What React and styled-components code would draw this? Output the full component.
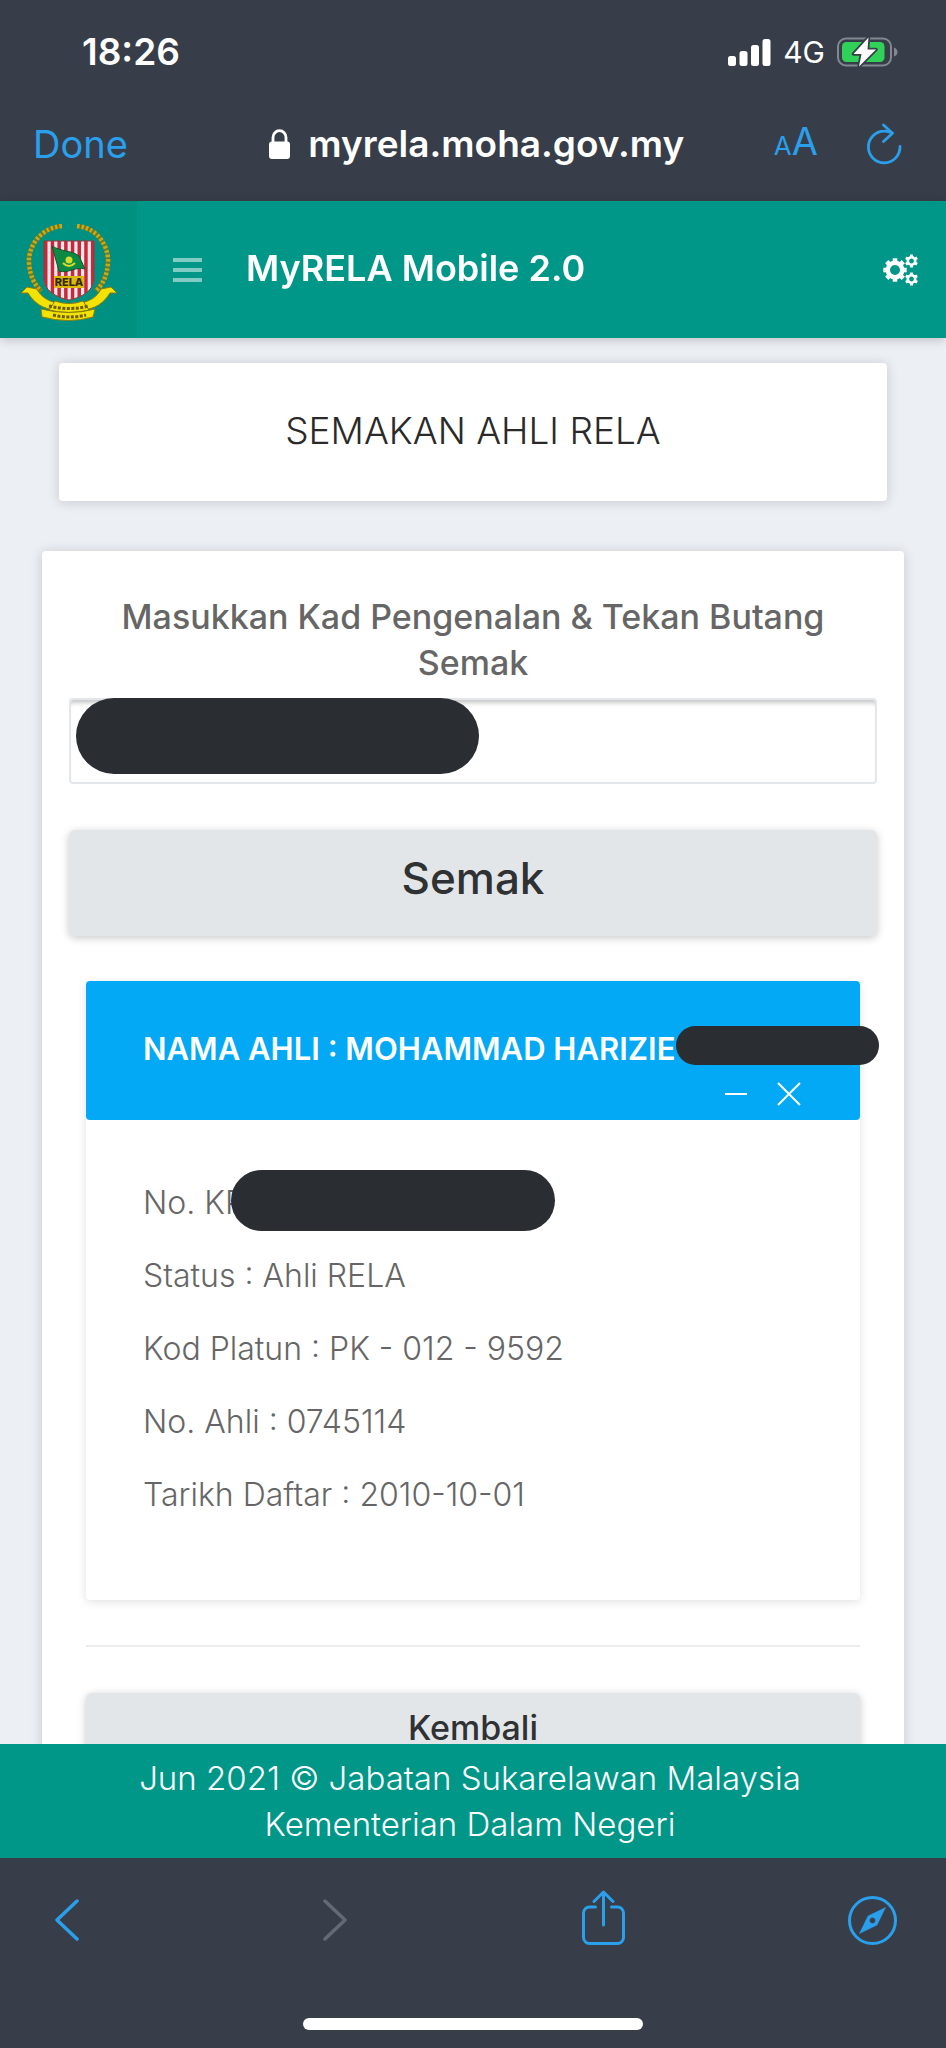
import styled, { createGlobalStyle } from "styled-components";

const GlobalStyles = createGlobalStyle`
  *,
  *::before,
  *::after {
    box-sizing: border-box;
    margin: 0;
    padding: 0;
  }

  body {
    font-family: Inter, "Liberation Sans", sans-serif;
    font-size: 32px;
    line-height: 46px;
    color: #666;
    background-color: #373e49;
  }

  button,
  input {
    font: inherit;
  }

  button {
    border: none;
    background: none;
    color: inherit;
    cursor: pointer;
  }
`;

const Phone = styled.div`
  display: flex;
  flex-direction: column;
  height: 100vh;
`;

/* Browser bars */

const StatusBar = styled.div`
  flex: none;
  display: flex;
  align-items: center;
  justify-content: space-between;
  height: 104px;
  padding: 0 48px 0 82px;
  color: #fff;
`;

const Time = styled.span`
  font-size: 37px;
  font-weight: 600;
`;

const Signals = styled.div`
  display: flex;
  align-items: center;
  gap: 12px;
  font-size: 30px;
`;

const AddressBar = styled.div`
  flex: none;
  display: flex;
  align-items: center;
  justify-content: space-between;
  height: 97px;
  padding: 0 44px 18px 33px;
  font-size: 38px;
  color: #2a9fec;
`;

const Address = styled.div`
  display: flex;
  align-items: center;
  gap: 18px;
  padding-left: 52px;
  font-size: 37px;
  font-weight: 600;
  color: #fff;
`;

const AddressActions = styled.div`
  display: flex;
  align-items: center;
  gap: 48px;

  svg {
    display: block;
  }
`;

const SmallA = styled.span`
  font-size: 26px;
`;

const ToolBar = styled.nav`
  flex: none;
  display: flex;
  justify-content: space-between;
  height: 124px;
  padding: 0 49px 0 42px;
  color: #2a9fec;
`;

const ToolButton = styled.button`
  display: flex;
  align-items: center;
  justify-content: center;
  width: 49px;

  &:disabled {
    color: #646a73;
  }
`;

const HomeArea = styled.div`
  flex: none;
  display: flex;
  justify-content: center;
  height: 66px;
  padding-top: 36px;
`;

const HomeIndicator = styled.div`
  width: 36%;
  height: 12px;
  border-radius: 6px;
  background-color: #fff;
`;

/* Site */

const Header = styled.header`
  flex: none;
  display: flex;
  align-items: center;
  height: 137px;
  padding-right: 27px;
  background-color: #009688;
  color: #fff;
  box-shadow: 0 2px 10px rgba(0, 0, 0, 0.2);
  z-index: 1;
`;

const Brand = styled.a`
  display: flex;
  align-items: center;
  justify-content: center;
  width: 137px;
  height: 100%;
  background-color: #009081;
`;

const MenuButton = styled.button`
  display: flex;
  flex-direction: column;
  gap: 6px;
  width: 29px;
  margin: 0 44px 0 36px;

  span {
    height: 4px;
    background-color: rgba(255, 255, 255, 0.5);
  }
`;

const SiteTitle = styled.h1`
  flex: 1;
  padding-bottom: 4px;
  font-size: 36px;
  font-weight: 600;
`;

const SettingsButton = styled.button`
  display: flex;
`;

const Content = styled.main`
  flex: 1;
  min-height: 0;
  overflow-y: auto;
  scrollbar-width: none;
  padding: 25px 42px 0;
  background-color: #eceff4;
`;

const Card = styled.section`
  border-radius: 4px;
  background-color: #fff;
  box-shadow: 0 1px 12px 1px rgba(0, 0, 0, 0.14);
`;

const TitleCard = styled(Card)`
  margin: 0 17px 50px;
  padding: 45px 46px 47px;
  text-align: center;
`;

const PageTitle = styled.h2`
  font-size: 37px;
  font-weight: 300;
  color: #2a2a2a;
`;

const FormCard = styled(Card)`
  padding: 43px 27px 60px;
`;

const Label = styled.label`
  display: block;
  padding: 0 40px;
  margin-bottom: 12px;
  font-size: 34px;
  font-weight: 500;
  text-align: center;
`;

const Field = styled.div`
  position: relative;
  margin-bottom: 46px;
`;

const Input = styled.input`
  display: block;
  width: 100%;
  height: 86px;
  padding: 0 24px;
  border: 2px solid #e3e6ea;
  border-radius: 4px;
  box-shadow: inset 0 6px 4px -3px rgba(0, 0, 0, 0.22);
  outline: none;
`;

const Redacted = styled.span`
  position: absolute;
  top: ${(props) => props.$top}px;
  left: ${(props) => props.$left}px;
  width: ${(props) => props.$width}px;
  height: ${(props) => props.$height}px;
  border-radius: 40px;
  background-color: #2a2e32;
`;

const Button = styled.button`
  display: block;
  width: 100%;
  height: ${(props) => (props.$large ? 106 : 80)}px;
  padding-bottom: 10px;
  border-radius: 6px;
  background-color: #e3e6e9;
  box-shadow: 0 2px 8px rgba(0, 0, 0, 0.22);
  font-size: ${(props) => (props.$large ? 44 : 34)}px;
  font-weight: 500;
  color: #2f3133;
`;

const Result = styled.div`
  padding: 0 17px;
`;

const Panel = styled.article`
  margin: 45px 0;
  border-radius: 4px;
  box-shadow: 0 2px 10px rgba(0, 0, 0, 0.12);
`;

const PanelHeader = styled.header`
  position: relative;
  height: 139px;
  padding: 45px 57px 0;
  border-radius: 4px;
  background-color: #03a9f4;
  color: #fff;
`;

const MemberName = styled.h3`
  margin-bottom: 10px;
  font-size: 31px;
  font-weight: 600;
  white-space: nowrap;
`;

const PanelActions = styled.div`
  display: flex;
  justify-content: flex-end;
  gap: 30px;
  padding-right: 2px;

  button {
    display: flex;
    align-items: center;
  }
`;

const PanelBody = styled.div`
  padding: 60px 57px 82px;
`;

const Detail = styled.p`
  position: relative;
  font-weight: 300;

  &:not(:last-child) {
    margin-bottom: 27px;
  }
`;

const Divider = styled.hr`
  margin-bottom: 46px;
  border: none;
  border-top: 2px solid #ebecee;
`;

const Footer = styled.footer`
  flex: none;
  padding: 11px 26px 11px 20px;
  background-color: #009688;
  color: #fff;
  font-size: 33px;
  font-weight: 300;
  text-align: center;
  z-index: 1;
`;

function SignalIcon() {
  return (
    <svg width="43" height="28" viewBox="0 0 43 28" fill="currentColor">
      <rect x="0" y="18" width="8" height="10" rx="2.5" />
      <rect x="11.5" y="13" width="8" height="15" rx="2.5" />
      <rect x="23" y="7" width="8" height="21" rx="2.5" />
      <rect x="34.5" y="1" width="8" height="27" rx="2.5" />
    </svg>
  );
}

function BatteryIcon() {
  return (
    <svg width="61" height="30" viewBox="0 0 61 30">
      <rect x="1" y="1.5" width="53" height="27" rx="8" fill="none" stroke="#84878f" strokeWidth="2" />
      <path d="M57 10.5q3.5 1.5 3.5 4.5t-3.5 4.5z" fill="#84878f" />
      <rect x="5" y="5" width="42.5" height="20" rx="4.5" fill="#30d158" />
      <path
        d="M31.5 0.5 16.500 17h8l-2.500 12.500L39 12.500h-8.500z"
        fill="#fff"
        stroke="#373e49"
        strokeWidth="3.500"
        strokeLinejoin="round"
        paintOrder="stroke"
      />
    </svg>
  );
}

function LockIcon() {
  return (
    <svg width="21" height="30" viewBox="0 0 21 30">
      <path d="M4 14V8.500a6.500 6.800 0 0 1 13 0V14" fill="none" stroke="currentColor" strokeWidth="2.800" />
      <rect x="0" y="12.500" width="21" height="17.500" rx="3" fill="currentColor" />
    </svg>
  );
}

function ReloadIcon() {
  return (
    <svg
      width="36"
      height="44"
      viewBox="0 0 36 44"
      fill="none"
      stroke="currentColor"
      strokeWidth="2.800"
      strokeLinecap="round"
      strokeLinejoin="round"
    >
      <path d="M34 24.500A15.800 15.800 0 1 1 18 9.200Q22.500 9 26 11" />
      <path d="M17.500 3 26.500 11.300 17.500 19.500" />
    </svg>
  );
}

function Gear({ x, y, radius, width, teeth, tooth }) {
  return (
    <g transform={`translate(${x} ${y})`} stroke="currentColor" fill="none">
      <circle r={radius} strokeWidth={width} />
      {Array.from({ length: teeth }, (_, i) => (
        <path
          key={i}
          d={`M0 ${-radius}V${-radius - width / 2 - tooth / 2}`}
          strokeWidth={tooth}
          transform={`rotate(${(i * 360) / teeth})`}
        />
      ))}
    </g>
  );
}

function GearsIcon() {
  return (
    <svg width="36" height="32" viewBox="0 0 36 32">
      <Gear x={12} y={16} radius={7.2} width={4.4} teeth={8} tooth={4.6} />
      <Gear x={28.5} y={7} radius={3.7} width={2.6} teeth={6} tooth={3} />
      <Gear x={28.5} y={25} radius={3.7} width={2.6} teeth={6} tooth={3} />
    </svg>
  );
}

function ChevronIcon({ right }) {
  return (
    <svg
      width="24"
      height="42"
      viewBox="0 0 24 42"
      fill="none"
      stroke="currentColor"
      strokeWidth="3.500"
      strokeLinecap="round"
      strokeLinejoin="round"
    >
      <path d={right ? "M2 2 22 21 2 40" : "M22 2 2 21 22 40"} />
    </svg>
  );
}

function ShareIcon() {
  return (
    <svg
      width="43"
      height="60"
      viewBox="0 0 43 60"
      fill="none"
      stroke="currentColor"
      strokeWidth="3"
      strokeLinecap="round"
      strokeLinejoin="round"
    >
      <path d="M13.500 17H7.500A6 6 0 0 0 1.500 23V47.500A6 6 0 0 0 7.500 53.500H35.500A6 6 0 0 0 41.500 47.500V23A6 6 0 0 0 35.500 17H29.500" />
      <path d="M21.500 35V2M12 11.500 21.500 2 31 11.500" />
    </svg>
  );
}

function CompassIcon() {
  return (
    <svg width="49" height="49" viewBox="0 0 49 49">
      <circle cx="24.500" cy="24.500" r="23" fill="none" stroke="currentColor" strokeWidth="3" />
      <path
        fill="currentColor"
        fillRule="evenodd"
        d="M37.500 11.500 29 29 11.500 37.500 20 20zM24.500 21.500a3 3 0 1 0 0 6a3 3 0 1 0 0-6z"
        stroke="currentColor"
        strokeWidth="0.500"
      />
    </svg>
  );
}

function Crest() {
  return (
    <svg width="120" height="120" viewBox="0 0 120 120">
      <g fill="none" strokeWidth="4.500">
        <path d="M53 16C30 18 19 38 20 53 21 66 25 74 32 81" stroke="#6f7a1c" />
        <path d="M53 16C30 18 19 38 20 53 21 66 25 74 32 81" stroke="#c9a91c" strokeDasharray="2.500 2" />
        <path d="M68 16C90 18 100 38 99 53 98 66 94 74 87 81" stroke="#6f7a1c" />
        <path d="M68 16C90 18 100 38 99 53 98 66 94 74 87 81" stroke="#c9a91c" strokeDasharray="2.500 2" />
      </g>
      <clipPath id="shield">
        <path d="M35 31H85V68C85 80 74 87 60 90 46 87 35 80 35 68z" />
      </clipPath>
      <g clipPath="url(#shield)">
        <rect x="35" y="31" width="50" height="60" fill="#f3e9ea" />
        {[0, 1, 2, 3, 4, 5, 6, 7].map((i) => (
          <rect key={i} x={35 + i * 6.7} y="31" width="3.500" height="60" fill="#c9283c" />
        ))}
      </g>
      <path
        d="M35 31H85V68C85 80 74 87 60 90 46 87 35 80 35 68z"
        fill="none"
        stroke="#8c3a3c"
        strokeWidth="1"
      />
      <path d="M43 36C53 42 62 40 70 46L76 59C66 56 60 64 50 61z" fill="#0c8a44" stroke="#12552c" strokeWidth="1" />
      <circle cx="60" cy="50" r="3.500" fill="#d6dc2a" />
      <path d="M54 53q6 6 12 0" fill="none" stroke="#d6dc2a" strokeWidth="2" />
      <rect x="45" y="66" width="30" height="12" fill="#dcb90c" />
      <text x="60" y="76" fontSize="11" fontWeight="800" textAnchor="middle" fill="#33280a">
        RELA
      </text>
      <g fill="#f2e205" stroke="#8a7a10" strokeWidth="1">
        <path d="M12 83 18 77 28 79C32 87 39 91 48 93L46 100C34 99 25 93 19 83z" />
        <path d="M108 83 102 77 92 79C88 87 81 91 72 93L74 100C86 99 95 93 101 83z" />
        <path d="M46 91Q60 96 74 91L80 100Q60 105 40 100z" />
        <path d="M32 99Q60 106 86 99L84 107Q60 114 33 107z" />
      </g>
      <g fill="none" stroke="#6d5c08" strokeWidth="3" strokeDasharray="3 1.500">
        <path d="M40 96Q60 101 80 96" />
        <path d="M44 105Q60 109 77 105" />
      </g>
    </svg>
  );
}

function MinusIcon() {
  return (
    <svg width="22" height="24" viewBox="0 0 22 24" stroke="currentColor" strokeWidth="2">
      <path d="M0 12H22" />
    </svg>
  );
}

function CloseIcon() {
  return (
    <svg width="24" height="24" viewBox="0 0 24 24" stroke="currentColor" strokeWidth="2">
      <path d="M1 1 23 23M23 1 1 23" />
    </svg>
  );
}

const details = [
  "Status : Ahli RELA",
  "Kod Platun : PK - 012 - 9592",
  "No. Ahli : 0745114",
  "Tarikh Daftar : 2010-10-01",
];

function App() {
  return (
    <>
      <GlobalStyles />
      <Phone>
        <StatusBar>
          <Time>18:26</Time>
          <Signals>
            <SignalIcon />
            <span>4G</span>
            <BatteryIcon />
          </Signals>
        </StatusBar>
        <AddressBar>
          <button>Done</button>
          <Address>
            <LockIcon />
            <span>myrela.moha.gov.my</span>
          </Address>
          <AddressActions>
            <button aria-label="Text size">
              <SmallA>A</SmallA>A
            </button>
            <button aria-label="Reload">
              <ReloadIcon />
            </button>
          </AddressActions>
        </AddressBar>

        <Header>
          <Brand href="#" aria-label="RELA">
            <Crest />
          </Brand>
          <MenuButton aria-label="Menu">
            <span />
            <span />
            <span />
          </MenuButton>
          <SiteTitle>MyRELA Mobile 2.0</SiteTitle>
          <SettingsButton aria-label="Settings">
            <GearsIcon />
          </SettingsButton>
        </Header>

        <Content>
          <TitleCard>
            <PageTitle>SEMAKAN AHLI RELA</PageTitle>
          </TitleCard>

          <FormCard>
            <Label htmlFor="kp">Masukkan Kad Pengenalan &amp; Tekan Butang Semak</Label>
            <Field>
              <Input id="kp" type="text" />
              <Redacted $top={0} $left={7} $width={403} $height={76} />
            </Field>
            <Button $large>Semak</Button>

            <Result>
              <Panel>
                <PanelHeader>
                  <MemberName>NAMA AHLI : MOHAMMAD HARIZIE</MemberName>
                  <Redacted $top={45} $left={590} $width={203} $height={39} />
                  <PanelActions>
                    <button aria-label="Minimise">
                      <MinusIcon />
                    </button>
                    <button aria-label="Close">
                      <CloseIcon />
                    </button>
                  </PanelActions>
                </PanelHeader>
                <PanelBody>
                  <Detail>
                    No. KP
                    <Redacted $top={-10} $left={88} $width={324} $height={61} />
                  </Detail>
                  {details.map((detail) => (
                    <Detail key={detail}>{detail}</Detail>
                  ))}
                </PanelBody>
              </Panel>
              <Divider />
              <Button>Kembali</Button>
            </Result>
          </FormCard>
        </Content>

        <Footer>
          <p>Jun 2021 © Jabatan Sukarelawan Malaysia</p>
          <p>Kementerian Dalam Negeri</p>
        </Footer>

        <ToolBar>
          <ToolButton aria-label="Back">
            <ChevronIcon />
          </ToolButton>
          <ToolButton aria-label="Forward" disabled>
            <ChevronIcon right />
          </ToolButton>
          <ToolButton aria-label="Share">
            <ShareIcon />
          </ToolButton>
          <ToolButton aria-label="Open in browser">
            <CompassIcon />
          </ToolButton>
        </ToolBar>
        <HomeArea>
          <HomeIndicator />
        </HomeArea>
      </Phone>
    </>
  );
}

export default App;
